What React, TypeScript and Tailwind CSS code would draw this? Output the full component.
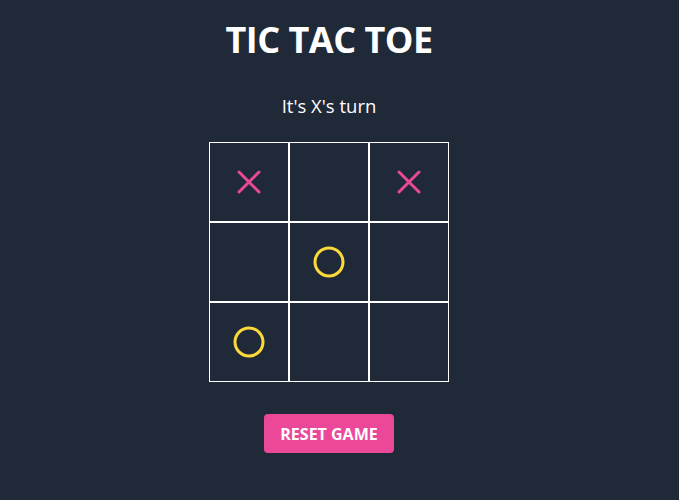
import { useState } from "react";

type Cell = "X" | "O" | null;

const initial: Cell[] = ["X", null, "X", null, "O", null, "O", null, null];

function XMark() {
  return (
    <svg width="24" height="24" viewBox="0 0 24 24" fill="none">
      <path d="M2 2L22 22M22 2L2 22" stroke="#ec4899" strokeWidth="3" strokeLinecap="round" />
    </svg>
  );
}

function OMark() {
  return (
    <svg width="32" height="32" viewBox="0 0 32 32" fill="none">
      <circle cx="16" cy="16" r="14" stroke="#fcd93a" strokeWidth="3" />
    </svg>
  );
}

export default function App() {
  const [board, setBoard] = useState<Cell[]>(initial);
  const xCount = board.filter((c) => c === "X").length;
  const oCount = board.filter((c) => c === "O").length;
  const turn = xCount <= oCount ? "X" : "O";

  function play(i: number) {
    if (board[i]) return;
    const next = [...board];
    next[i] = turn;
    setBoard(next);
  }

  return (
    <div
      className="min-h-[500px] w-full bg-[#1f2937] text-white"
      style={{ fontFamily: '"Open Sans", "Noto Sans", sans-serif' }}
    >
      <div className="flex w-[658px] flex-col items-center pt-[18px]">
        <h1 className="text-[36px] font-bold leading-[44px] tracking-[-0.5px]">TIC TAC TOE</h1>
        <p className="mt-[32px] text-[18.5px] leading-6">It's {turn}'s turn</p>
        <div className="mt-[24px] grid grid-cols-3">
          {board.map((cell, i) => (
            <button
              key={i}
              onClick={() => play(i)}
              className="flex h-20 w-20 items-center justify-center border border-white"
            >
              {cell === "X" && <XMark />}
              {cell === "O" && <OMark />}
            </button>
          ))}
        </div>
        <button
          onClick={() => setBoard(Array(9).fill(null))}
          className="mt-8 h-[39px] rounded bg-[#ec4899] px-4 text-[16px] font-bold text-white"
        >
          RESET GAME
        </button>
      </div>
    </div>
  );
}
